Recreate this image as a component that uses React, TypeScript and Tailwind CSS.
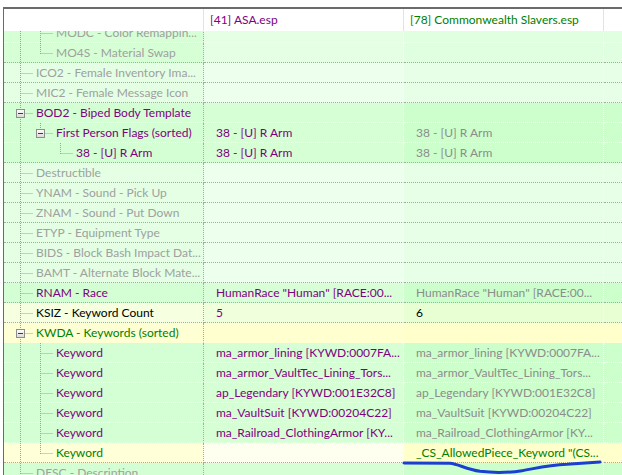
import React from "react";

type Row = {
  label: string;
  level: number;
  last?: boolean;
  box?: boolean;
  cont: number[];
  lc: string;
  v1?: string;
  v1c?: string;
  v2?: string;
  v2c?: string;
  bg: [string, string, string];
  sep: "w" | "g";
};

const GRAY = "text-[#a0a0a0]";
const PURPLE = "text-[#800080]";
const GREEN = "text-[#008000]";
const VGRAY = "text-[#8c8c8c]";
const BLACK = "text-[#000000]";

const BG_GRAY: [string, string, string] = ["bg-[#e4ffe4]", "bg-[#edffed]", "bg-[#e6ffe6]"];
const BG_TOP: [string, string, string] = ["bg-[#d6ffd6]", "bg-[#e4ffe4]", "bg-[#e0ffe0]"];
const BG_SAT: [string, string, string] = ["bg-[#d4ffd4]", "bg-[#d6ffd6]", "bg-[#ccffcc]"];

const rows: Row[] = [
  { label: "MODC - Color Remappin...", level: 1, cont: [0], lc: GRAY, bg: BG_TOP, sep: "w" },
  { label: "MO4S - Material Swap", level: 1, last: true, cont: [0], lc: GRAY, bg: BG_TOP, sep: "g" },
  { label: "ICO2 - Female Inventory Ima...", level: 0, cont: [], lc: GRAY, bg: BG_GRAY, sep: "g" },
  { label: "MIC2 - Female Message Icon", level: 0, cont: [], lc: GRAY, bg: BG_GRAY, sep: "g" },
  { label: "BOD2 - Biped Body Template", level: 0, box: true, cont: [], lc: PURPLE, bg: BG_SAT, sep: "w" },
  {
    label: "First Person Flags (sorted)",
    level: 1,
    box: true,
    last: true,
    cont: [0],
    lc: PURPLE,
    v1: "38 - [U] R Arm",
    v1c: PURPLE,
    v2: "38 - [U] R Arm",
    v2c: VGRAY,
    bg: BG_SAT,
    sep: "w",
  },
  {
    label: "38 - [U] R Arm",
    level: 2,
    last: true,
    cont: [0],
    lc: PURPLE,
    v1: "38 - [U] R Arm",
    v1c: PURPLE,
    v2: "38 - [U] R Arm",
    v2c: VGRAY,
    bg: BG_SAT,
    sep: "g",
  },
  { label: "Destructible", level: 0, cont: [], lc: GRAY, bg: BG_GRAY, sep: "g" },
  { label: "YNAM - Sound - Pick Up", level: 0, cont: [], lc: GRAY, bg: BG_GRAY, sep: "g" },
  { label: "ZNAM - Sound - Put Down", level: 0, cont: [], lc: GRAY, bg: BG_GRAY, sep: "g" },
  { label: "ETYP - Equipment Type", level: 0, cont: [], lc: GRAY, bg: BG_GRAY, sep: "g" },
  { label: "BIDS - Block Bash Impact Dat...", level: 0, cont: [], lc: GRAY, bg: BG_GRAY, sep: "g" },
  { label: "BAMT - Alternate Block Mate...", level: 0, cont: [], lc: GRAY, bg: BG_GRAY, sep: "g" },
  {
    label: "RNAM - Race",
    level: 0,
    cont: [],
    lc: PURPLE,
    v1: 'HumanRace "Human" [RACE:00...',
    v1c: PURPLE,
    v2: 'HumanRace "Human" [RACE:00...',
    v2c: VGRAY,
    bg: ["bg-[#d4ffd4]", "bg-[#d8ffd8]", "bg-[#ccffcc]"],
    sep: "g",
  },
  {
    label: "KSIZ - Keyword Count",
    level: 0,
    cont: [],
    lc: BLACK,
    v1: "5",
    v1c: PURPLE,
    v2: "6",
    v2c: BLACK,
    bg: ["bg-[#f6ffe0]", "bg-[#f0ffdc]", "bg-[#e8ffd4]"],
    sep: "g",
  },
  {
    label: "KWDA - Keywords (sorted)",
    level: 0,
    box: true,
    cont: [],
    lc: GREEN,
    bg: ["bg-[#ffffd4]", "bg-[#ffffd0]", "bg-[#ffffcc]"],
    sep: "w",
  },
  {
    label: "Keyword",
    level: 1,
    cont: [0],
    lc: PURPLE,
    v1: "ma_armor_lining [KYWD:0007FA...",
    v1c: PURPLE,
    v2: "ma_armor_lining [KYWD:0007FA...",
    v2c: VGRAY,
    bg: BG_SAT,
    sep: "w",
  },
  {
    label: "Keyword",
    level: 1,
    cont: [0],
    lc: PURPLE,
    v1: "ma_armor_VaultTec_Lining_Tors...",
    v1c: PURPLE,
    v2: "ma_armor_VaultTec_Lining_Tors...",
    v2c: VGRAY,
    bg: BG_SAT,
    sep: "w",
  },
  {
    label: "Keyword",
    level: 1,
    cont: [0],
    lc: PURPLE,
    v1: "ap_Legendary [KYWD:001E32C8]",
    v1c: PURPLE,
    v2: "ap_Legendary [KYWD:001E32C8]",
    v2c: VGRAY,
    bg: BG_SAT,
    sep: "w",
  },
  {
    label: "Keyword",
    level: 1,
    cont: [0],
    lc: PURPLE,
    v1: "ma_VaultSuit [KYWD:00204C22]",
    v1c: PURPLE,
    v2: "ma_VaultSuit [KYWD:00204C22]",
    v2c: VGRAY,
    bg: BG_SAT,
    sep: "w",
  },
  {
    label: "Keyword",
    level: 1,
    cont: [0],
    lc: PURPLE,
    v1: "ma_Railroad_ClothingArmor [KY...",
    v1c: PURPLE,
    v2: "ma_Railroad_ClothingArmor [KY...",
    v2c: VGRAY,
    bg: BG_SAT,
    sep: "w",
  },
  {
    label: "Keyword",
    level: 1,
    last: true,
    cont: [0],
    lc: GREEN,
    v2: '_CS_AllowedPiece_Keyword "(CS...',
    v2c: GREEN,
    bg: ["bg-[#ffffd8]", "bg-[#fffff0]", "bg-[#ffffcc]"],
    sep: "g",
  },
  { label: "DESC - Description", level: 0, cont: [], lc: GRAY, bg: BG_SAT, sep: "g" },
];

function TreeLines({ row }: { row: Row }) {
  const L = row.level;
  const ox = 16 + 20 * L + 0.5;
  const line = "#a0a0a0";
  return (
    <svg className="absolute left-0 top-0 pointer-events-none" width={200} height={20}>
      <defs>
        <linearGradient id="bx" x1="0" y1="0" x2="0" y2="1">
          <stop offset="0" stopColor="#ffffff" />
          <stop offset="1" stopColor="#d8d8d8" />
        </linearGradient>
      </defs>
      {row.cont.map((k) => (
        <line
          key={k}
          x1={16 + 20 * k + 0.5}
          y1={0}
          x2={16 + 20 * k + 0.5}
          y2={20}
          stroke={line}
          strokeWidth={1}
          strokeDasharray="1 1"
        />
      ))}
      <line x1={ox} y1={0} x2={ox} y2={row.last ? 11 : 20} stroke={line} strokeWidth={1} strokeDasharray="1 1" />
      <line
        x1={row.box ? ox + 4 : ox}
        y1={10.5}
        x2={16 + 20 * L + 13}
        y2={10.5}
        stroke={line}
        strokeWidth={1}
        strokeDasharray="1 1"
      />
      {row.box && (
        <g>
          <rect x={12.5 + 20 * L} y={6.5} width={8} height={8} fill="url(#bx)" stroke="#8e8e8e" strokeWidth={1} />
          <line x1={14 + 20 * L} y1={10.5} x2={19 + 20 * L} y2={10.5} stroke="#3a3a3a" strokeWidth={1} />
        </g>
      )}
    </svg>
  );
}

function BodyRow({ row }: { row: Row }) {
  const sepB = row.sep === "w" ? "border-b-[#f4fff4]" : "border-b-[#a8a8a8]";
  return (
    <div className="flex h-[20px] shrink-0">
      <div
        className={`relative w-[200px] shrink-0 border-b border-r border-dotted ${sepB} border-r-[#a8a8a8] ${row.bg[0]}`}
      >
        <TreeLines row={row} />
        <div
          className={`whitespace-nowrap overflow-hidden leading-[19px] ${row.lc}`}
          style={{ paddingLeft: 32 + 20 * row.level }}
        >
          {row.label}
        </div>
      </div>
      <div
        className={`w-[200px] shrink-0 border-b border-r border-dotted ${sepB} border-r-[#f6fff6] ${row.bg[1]} pl-[12px] whitespace-nowrap overflow-hidden leading-[19px] ${row.v1c ?? ""}`}
      >
        {row.v1 ?? ""}
      </div>
      <div
        className={`w-[200px] shrink-0 border-b border-r border-dotted ${sepB} border-r-[#f6fff6] ${row.bg[2]} pl-[12px] whitespace-nowrap overflow-hidden leading-[19px] ${row.v2c ?? ""}`}
      >
        {row.v2 ?? ""}
      </div>
      <div className={`flex-1 border-b border-dotted ${sepB} ${row.bg[2]}`} />
    </div>
  );
}

export default function App() {
  return (
    <div className="relative w-[622px] h-[475px] overflow-hidden bg-white font-['Lato','Noto_Sans',sans-serif] text-[12px]">
      <div className="absolute inset-0 pt-[7px] pl-[3px] flex flex-col">
        <div className="flex flex-col flex-1 min-h-0 border-t-2 border-l border-[#6b6b6b]">
          <div className="flex h-[22px] shrink-0 bg-white">
            <div className="w-[200px] shrink-0 border-r border-[#e3e3e3]" />
            <div className="w-[200px] shrink-0 border-r border-[#e3e3e3] pl-[6px] leading-[22px] text-[#800080] whitespace-nowrap">
              [41] ASA.esp
            </div>
            <div className="w-[200px] shrink-0 border-r border-[#e3e3e3] pl-[6px] leading-[22px] text-[#008000] whitespace-nowrap">
              [78] Commonwealth Slavers.esp
            </div>
            <div className="flex-1" />
          </div>
          <div className="flex-1 min-h-0 overflow-hidden">
            <div className="flex flex-col -mt-[8px]">
              {rows.map((r, i) => (
                <BodyRow key={i} row={r} />
              ))}
            </div>
          </div>
        </div>
      </div>
      <svg className="absolute left-0 top-0 pointer-events-none" width={622} height={475}>
        <path
          d="M404 463 L450 463.3 C458 464 466 469 480 471.3 C494 473 510 472.5 522 470.7 C535 468.5 548 465 567 464.2 L600 462"
          fill="none"
          stroke="#1b3fd0"
          strokeWidth={3}
          strokeLinecap="round"
        />
      </svg>
    </div>
  );
}
